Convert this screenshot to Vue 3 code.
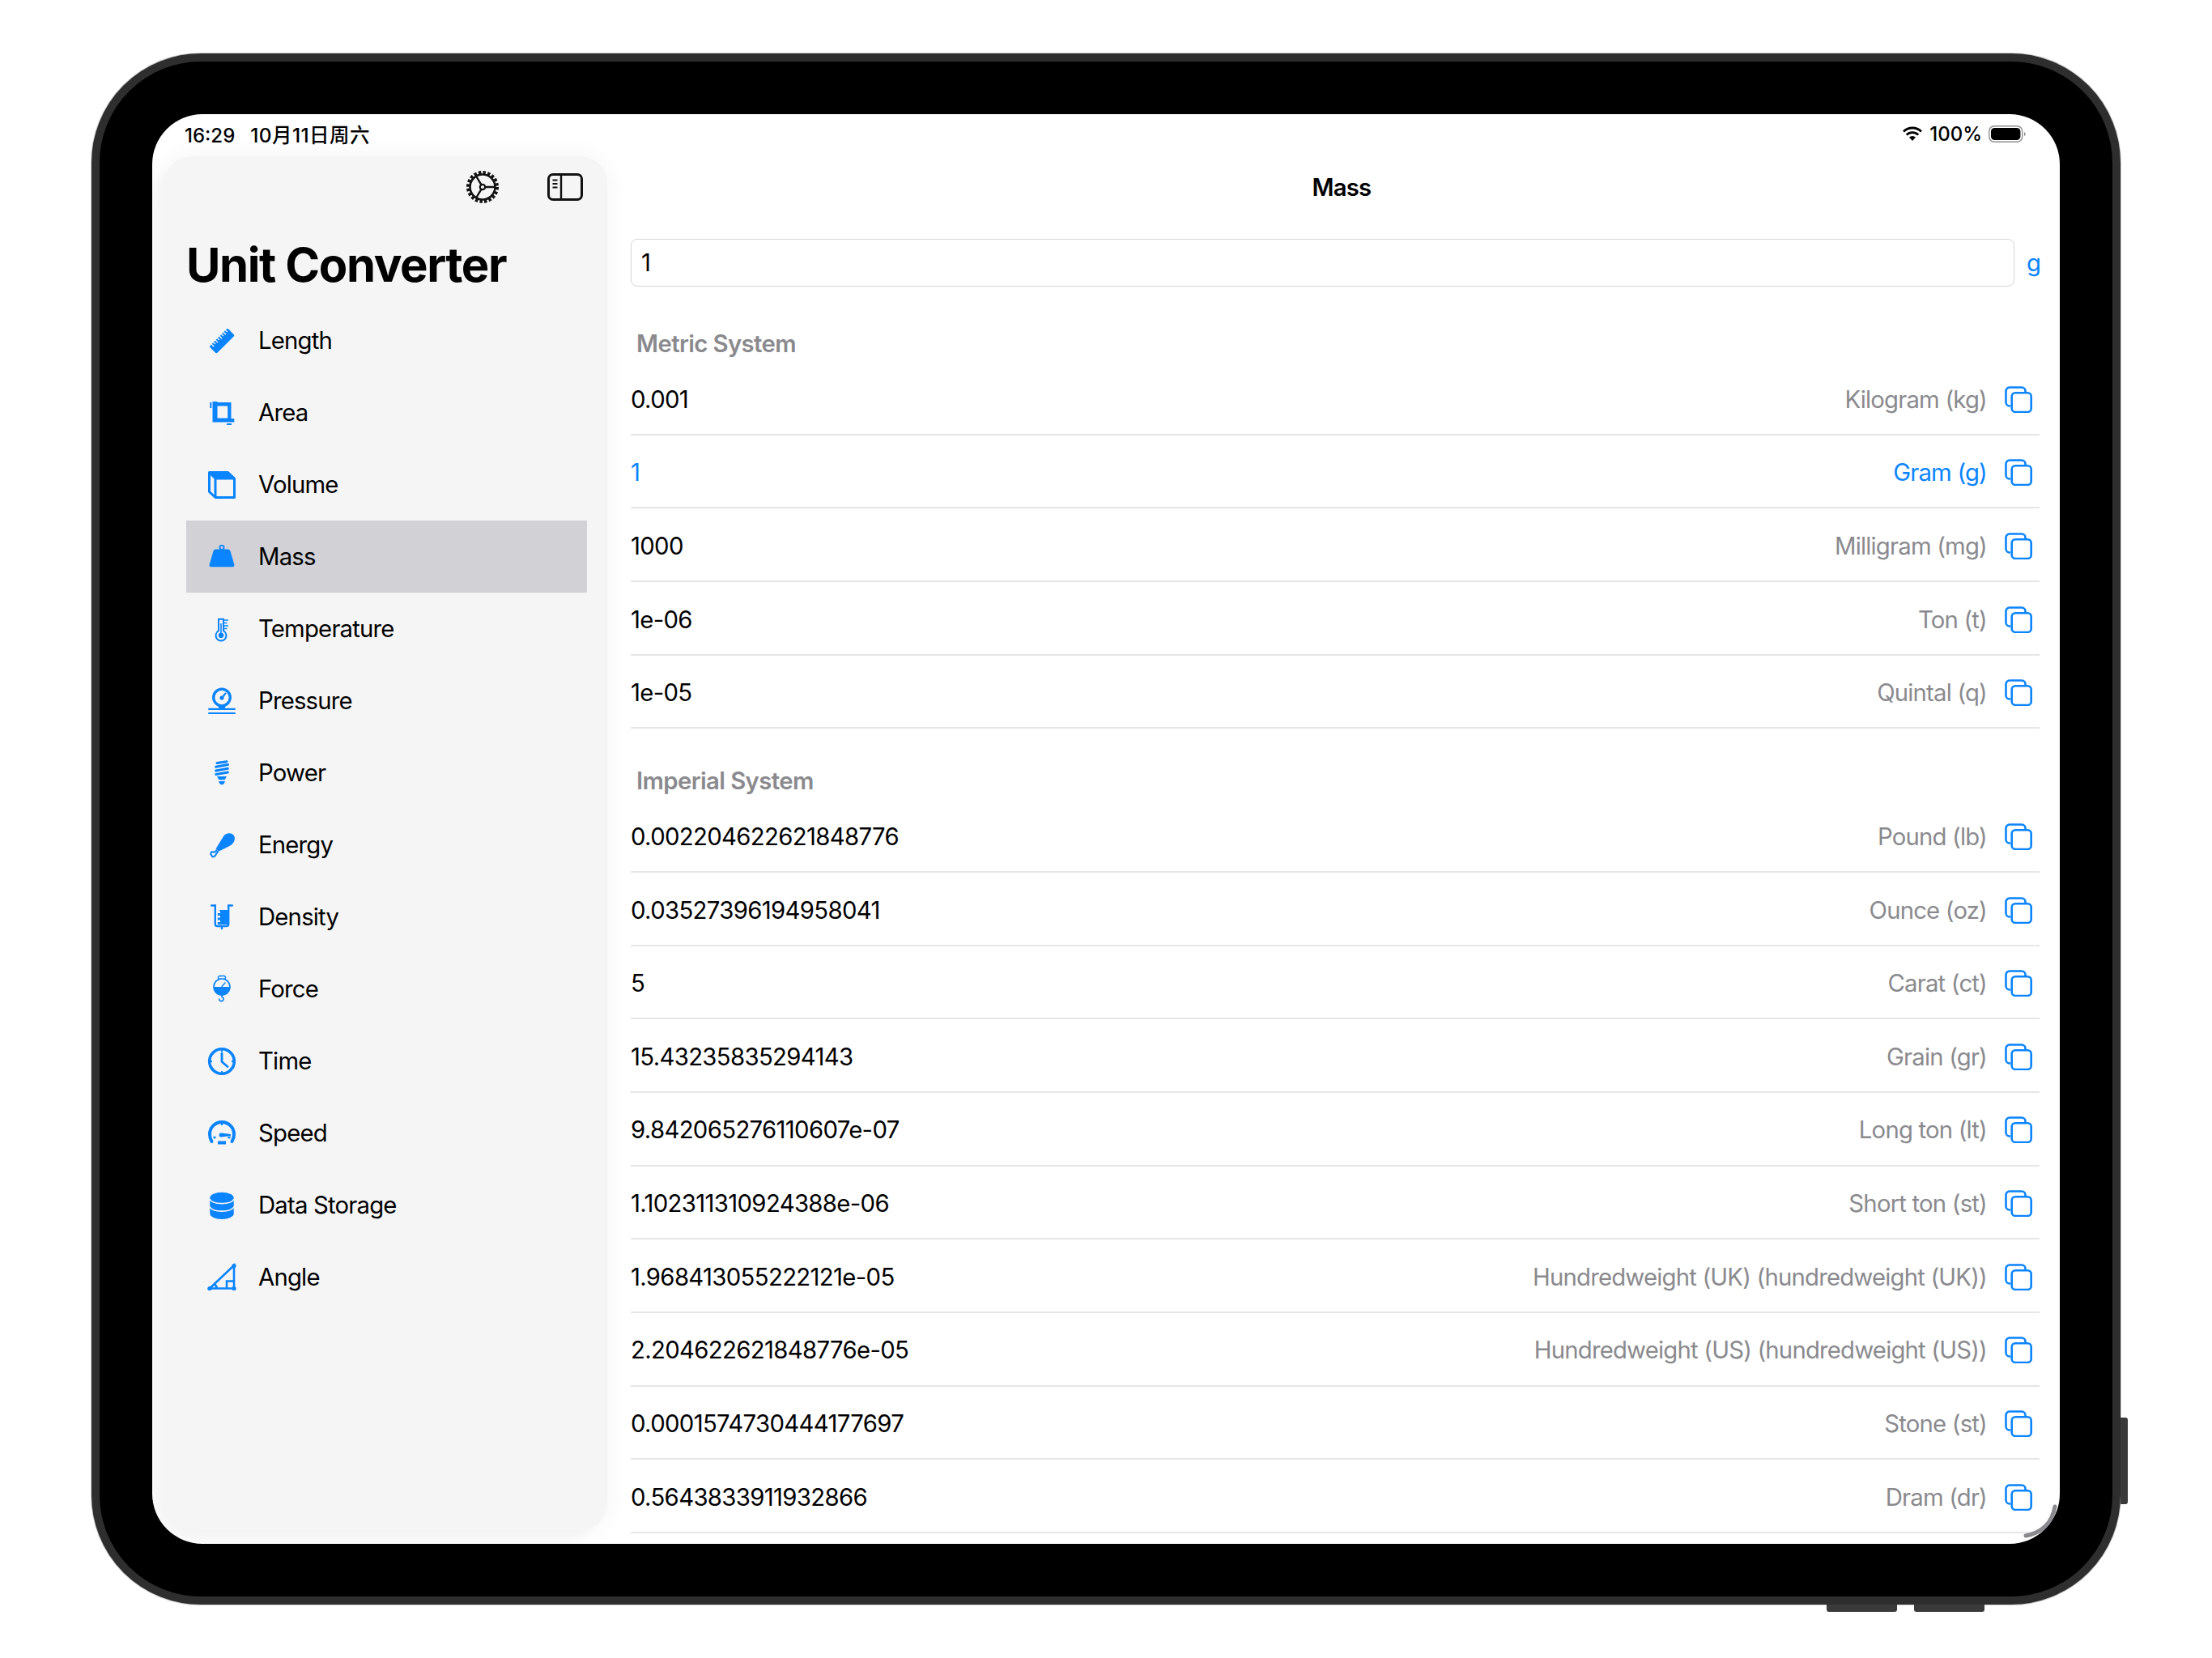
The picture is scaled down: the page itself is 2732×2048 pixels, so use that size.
<script setup>
const icons = {
  length: `<g transform="rotate(-45 18 18)"><rect x="2" y="12" width="32" height="12.5" rx="1.6" fill="currentColor"/><path d="M6 12v4M9.500 12v3M13 12v4M16.500 12v3M20 12v4M23.500 12v3M27 12v4M30.500 12v3" stroke="#f5f5f5" stroke-width="1.4"/></g>`,
  area: `<path fill="currentColor" d="M6.5 4h6v1h17v20h3.8v4.5H6.5zM12.5 9.5V24.5h12.7V9.5zM3.3 5h2v7h-2zM24 31h6v2h-6z"/>`,
  volume: `<path fill="none" stroke="currentColor" stroke-width="3" stroke-linejoin="round" d="M2.5 2.5H25.5L33.5 10V33.5H10L2.5 26.5ZM2.5 2.5 10 10H33.5M10 10V33.5"/><path fill="currentColor" d="M2.5 2.5H25.5L33.5 10H10Z"/>`,
  mass: `<circle cx="18" cy="6.3" r="2.6" fill="none" stroke="currentColor" stroke-width="1.8"/><path fill="currentColor" d="M10.5 8.5H25.5Q27.8 8.5 28.5 10.8L33.3 27.3Q34 30.3 31 30.3H5Q2 30.3 2.7 27.3L7.5 10.8Q8.2 8.5 10.5 8.5Z"/>`,
  temperature: `<path fill="none" stroke="currentColor" stroke-width="2" d="M14 5.8H20V20.2A6.5 6.5 0 1 1 14 20.2Z"/><path fill="currentColor" d="M16.2 11H17.8V22.5A3.4 3.4 0 1 1 16.2 22.5Z"/><path stroke="currentColor" stroke-width="1.5" d="M20 7h6M20 10.5h4.5M20 14h6M20 17.5h4.5"/>`,
  pressure: `<circle cx="18" cy="13.5" r="10.3" fill="none" stroke="currentColor" stroke-width="3.3"/><circle cx="18" cy="14" r="2.6" fill="currentColor"/><path stroke="currentColor" stroke-width="2" stroke-linecap="round" d="M18 14 22.5 8.5"/><path fill="currentColor" d="M14 23h8v4h-8z"/><path stroke="currentColor" stroke-width="2.2" d="M1.3 27.8H34.7M1.3 33H34.7"/>`,
  power: `<g stroke="currentColor" stroke-width="3" stroke-linecap="round" fill="none"><path d="M12 5.500 24 3.800M10.600 10.200 25.400 7.500M10.600 15 25.400 12.200M10.800 19.500 25.400 17"/></g><path fill="currentColor" d="M12 22H24L21.600 26.300H14.400ZM14 28H22L20.500 31.300Q18 33.300 15.500 31.300Z"/>`,
  energy: `<path fill="currentColor" d="M10.500 22.500 21 5.500Q25.300 2.300 30 3.700 34.700 6 33.800 11.300 32.500 16.500 27 19.300L14 25.800 12.500 24.300Z"/><path fill="none" stroke="currentColor" stroke-width="2" stroke-linejoin="round" d="M11 24.500 9.500 26.500 5 26.200 4.200 29 6.500 32.500 9.700 31.300 11.500 28 13 26.500Z"/>`,
  density: `<path fill="none" stroke="currentColor" stroke-width="2.400" stroke-linecap="round" d="M5.200 3.500H9.800V26.500Q9.800 29 12.300 29H23.700Q26.200 29 26.200 26.500V3.500H30.800M18 29V32"/><path fill="currentColor" d="M15 9H26.200V27H12.800V24H16V21.500H12.800V18.500H16V16H12.800V13H16V10.500H15Z"/>`,
  force: `<rect x="13.500" y="1.500" width="9" height="4" rx="2" fill="none" stroke="currentColor" stroke-width="1.400"/><circle cx="18" cy="15" r="10" fill="#f5f5f5" stroke="currentColor" stroke-width="1.600"/><path fill="currentColor" d="M8 15H28A10 10 0 0 1 8 15Z"/><path stroke="currentColor" stroke-width="1.400" stroke-linecap="round" d="M18 14.500 22 10"/><path fill="none" stroke="currentColor" stroke-width="1.600" stroke-linecap="round" d="M18 25V27.500A2.600 2.600 0 1 1 14.800 30"/>`,
  time: `<circle cx="18" cy="18" r="15.300" fill="none" stroke="currentColor" stroke-width="3.600"/><path fill="none" stroke="currentColor" stroke-width="2.800" stroke-linecap="round" stroke-linejoin="round" d="M18 8V18.500L25 24.500"/><path stroke="currentColor" stroke-width="1.800" d="M18 4V6M18 30V32M4 18H6M30 18H32"/>`,
  speed: `<path fill="none" stroke="currentColor" stroke-width="4" stroke-linecap="round" d="M5.500 28Q3 24 3 19A15 15 0 0 1 33 19Q33 24 30.500 28"/><path stroke="currentColor" stroke-width="2.400" d="M18 5V8M7.500 23h3M25.500 23h3"/><path fill="currentColor" d="M14.500 20A2.600 2.600 0 0 1 17.500 17.500L29 19V21L17.500 22.500A2.600 2.600 0 0 1 14.500 20ZM13 27.500h10v4h-10z"/>`,
  storage: `<path fill="currentColor" d="M3.300 8.500A14.700 6.800 0 0 1 32.700 8.500V28A14.700 7 0 0 1 3.300 28Z"/><path fill="none" stroke="#f5f5f5" stroke-width="1.600" d="M3 10C6 17.500 30 17.500 33 10M3 19.500C6 27 30 27 33 19.500"/>`,
  angle: `<path fill="none" stroke="currentColor" stroke-width="2.600" d="M3 31.500H33V3ZM24 31.500V22.500H33M8.500 26.500Q12 28 11.500 31.500"/><g fill="currentColor"><circle cx="33" cy="3.500" r="2.600"/><circle cx="33" cy="31.500" r="2.600"/><circle cx="3" cy="31.500" r="2.600"/></g>`,
}

const categories = [
  { name: "Length", icon: "length" },
  { name: "Area", icon: "area" },
  { name: "Volume", icon: "volume" },
  { name: "Mass", icon: "mass", active: true },
  { name: "Temperature", icon: "temperature" },
  { name: "Pressure", icon: "pressure" },
  { name: "Power", icon: "power" },
  { name: "Energy", icon: "energy" },
  { name: "Density", icon: "density" },
  { name: "Force", icon: "force" },
  { name: "Time", icon: "time" },
  { name: "Speed", icon: "speed" },
  { name: "Data Storage", icon: "storage" },
  { name: "Angle", icon: "angle" },
]

const metric = [
  { value: "0.001", unit: "Kilogram (kg)" },
  { value: "1", unit: "Gram (g)", current: true },
  { value: "1000", unit: "Milligram (mg)" },
  { value: "1e-06", unit: "Ton (t)" },
  { value: "1e-05", unit: "Quintal (q)" },
]

const imperial = [
  { value: "0.002204622621848776", unit: "Pound (lb)" },
  { value: "0.03527396194958041", unit: "Ounce (oz)" },
  { value: "5", unit: "Carat (ct)" },
  { value: "15.43235835294143", unit: "Grain (gr)" },
  { value: "9.842065276110607e-07", unit: "Long ton (lt)" },
  { value: "1.102311310924388e-06", unit: "Short ton (st)" },
  { value: "1.968413055222121e-05", unit: "Hundredweight (UK) (hundredweight (UK))" },
  { value: "2.204622621848776e-05", unit: "Hundredweight (US) (hundredweight (US))" },
  { value: "0.0001574730444177697", unit: "Stone (st)" },
  { value: "0.5643833911932866", unit: "Dram (dr)" },
]

const sections = [
  { title: "Metric System", rows: metric },
  { title: "Imperial System", rows: imperial },
]
</script>

<template>
  <div class="stage">
    <div class="device">
      <div class="screen">
        <div class="status">
          <div class="status-left">
            <span>16:29</span>
            <span class="date">10月11日周六</span>
          </div>
          <div class="status-right">
            <svg class="wifi" width="26" height="18" viewBox="0 0 26 18">
              <path d="M13 18 9 13.6a5.8 5.8 0 0 1 8 0Z" fill="#000" />
              <path d="M5.700 10.500a10.500 10.500 0 0 1 14.600 0" fill="none" stroke="#000" stroke-width="2.8" />
              <path d="M2 6.400a16 16 0 0 1 22 0" fill="none" stroke="#000" stroke-width="2.8" />
            </svg>
            <span>100%</span>
            <svg width="46" height="21" viewBox="0 0 46 21">
              <rect x="0.7" y="0.7" width="41" height="19.6" rx="6.5" fill="none" stroke="#8e8e8e" stroke-width="1.4" />
              <rect x="3" y="3" width="36.4" height="15" rx="4.5" fill="#000" />
              <path d="M44 8v5q1.800-1 1.800-2.500T44 8Z" fill="#8e8e8e" />
            </svg>
          </div>
        </div>

        <aside class="sidebar">
          <div class="toolbar">
            <svg class="gear" width="40" height="40" viewBox="0 0 40 40">
              <circle cx="20" cy="20" r="18" fill="none" stroke="#111" stroke-width="4" stroke-dasharray="3.4 2.254" />
              <circle cx="20" cy="20" r="15.5" fill="none" stroke="#111" stroke-width="2.6" />
              <circle cx="20" cy="20" r="3.2" fill="none" stroke="#111" stroke-width="2.2" />
              <path d="M23.200 20H35M18.400 17.200 12 6.500M18.400 22.800 12 33.500" stroke="#111" stroke-width="2.4" />
            </svg>
            <svg class="panel" width="44" height="34" viewBox="0 0 44 34">
              <rect x="1.5" y="1.5" width="41" height="31" rx="5.5" fill="none" stroke="#111" stroke-width="3" />
              <path d="M17 2V32" stroke="#111" stroke-width="2.4" />
              <path d="M6.500 8.500h6M6.500 13h6M6.500 17.500h6" stroke="#111" stroke-width="2" />
            </svg>
          </div>
          <h1 class="app-title">Unit Converter</h1>
          <ul class="categories">
            <li v-for="c in categories" :key="c.name" class="category" :class="{ active: c.active }">
              <svg class="cat-icon" width="36" height="36" viewBox="0 0 36 36" v-html="icons[c.icon]"></svg>
              <span>{{ c.name }}</span>
            </li>
          </ul>
        </aside>

        <main class="main">
          <div class="nav-title">Mass</div>
          <div class="input-row">
            <div class="input">1</div>
            <span class="input-unit">g</span>
          </div>
          <section v-for="s in sections" :key="s.title" class="section">
            <h2 class="section-title">{{ s.title }}</h2>
            <div v-for="r in s.rows" :key="r.unit" class="row" :class="{ current: r.current }">
              <span class="value">{{ r.value }}</span>
              <span class="unit">{{ r.unit }}</span>
              <svg class="copy" width="34" height="33" viewBox="0 0 34 33">
                <path d="M7 24.500H6A4.500 4.500 0 0 1 1.500 20V6A4.500 4.500 0 0 1 6 1.500H21A4.500 4.500 0 0 1 25.500 6V8" fill="none" stroke="#0a84ff" stroke-width="2.6" />
                <rect x="8.7" y="8.2" width="24" height="23.8" rx="4.5" fill="none" stroke="#0a84ff" stroke-width="2.6" />
              </svg>
            </div>
          </section>
        </main>

        <svg class="resize" width="44" height="44" viewBox="0 0 44 44">
          <path d="M40 4Q35 34 4 40" fill="none" stroke="#8a8a8e" stroke-width="5" stroke-linecap="round" />
        </svg>
      </div>
      <div class="side-button"></div>
      <div class="bottom-button one"></div>
      <div class="bottom-button two"></div>
    </div>
  </div>
</template>

<style>
html, body {
  margin: 0;
  background: #fff;
}
</style>

<style scoped>
.stage {
  width: 2732px;
  height: 2048px;
  box-sizing: border-box;
  padding: 66px 113px;
  background: #fff;
  font-family: Inter, "Noto Sans CJK SC", sans-serif;
  color: #000;
}
.device {
  position: relative;
  width: 2506px;
  height: 1916px;
  box-sizing: border-box;
  padding: 65px;
  background: #000;
  border: 10px solid #2e2e2e;
  border-radius: 135px;
  box-shadow: 0 0 0 1px rgba(90, 90, 90, 0.3);
}
.screen {
  position: relative;
  display: flex;
  width: 2356px;
  height: 1766px;
  overflow: hidden;
  background: #fff;
  border-radius: 62px;
}
.status {
  position: absolute;
  top: 12px;
  left: 40px;
  right: 42px;
  display: flex;
  justify-content: space-between;
  align-items: center;
  height: 24px;
  font-size: 24px;
  font-weight: 500;
}
.status-left {
  display: flex;
  align-items: baseline;
  gap: 19px;
}
.date {
  font-size: 24.5px;
  letter-spacing: 0.4px;
}
.status-right {
  display: flex;
  align-items: center;
  gap: 8px;
}
.sidebar {
  flex: none;
  box-sizing: border-box;
  width: 547px;
  margin: 52px 0 17px 15px;
  padding: 0 0 0 27px;
  background: #f5f5f5;
  border-radius: 34px;
  box-shadow: 0 0 30px rgba(0, 0, 0, 0.05), -16px 16px 14px rgba(0, 0, 0, 0.025);
}
.toolbar {
  display: flex;
  justify-content: flex-end;
  align-items: center;
  gap: 60px;
  height: 40px;
  margin-top: 18px;
  padding-right: 30px;
}
.app-title {
  margin: 41px 0 0;
  font-size: 58px;
  line-height: 70px;
  font-weight: 700;
  letter-spacing: -1.4px;
}
.categories {
  list-style: none;
  width: 495px;
  margin: 14px 0 0;
  padding: 0;
}
.category {
  display: flex;
  align-items: center;
  gap: 27px;
  height: 89px;
  box-sizing: border-box;
  padding-left: 26px;
  font-size: 29.3px;
  letter-spacing: -0.8px;
}
.category.active {
  background: #d1d1d6;
}
.cat-icon {
  flex: none;
  color: #0a84ff;
}
.main {
  flex: 1;
  min-width: 0;
  margin-left: 29px;
  padding-right: 25px;
}
.nav-title {
  margin: 71px 0 0 16px;
  height: 40px;
  line-height: 40px;
  text-align: center;
  font-size: 29.3px;
  font-weight: 600;
  letter-spacing: -0.8px;
}
.input-row {
  display: flex;
  align-items: center;
  gap: 15px;
  margin-top: 43px;
}
.input {
  flex: 1;
  box-sizing: border-box;
  height: 59px;
  line-height: 57px;
  padding-left: 12px;
  border: 1px solid #d6d6d6;
  border-radius: 8px;
  font-size: 29.3px;
}
.input-unit {
  width: 16px;
  font-size: 29.3px;
  color: #0a84ff;
}
.section {
  margin-top: 53px;
}
.section + .section {
  margin-top: 47px;
}
.section-title {
  margin: 0 0 4px 7px;
  height: 36px;
  line-height: 36px;
  font-size: 29.3px;
  font-weight: 600;
  letter-spacing: -0.6px;
  color: #8a8a8e;
}
.row {
  display: flex;
  align-items: center;
  box-sizing: border-box;
  height: 90.67px;
  padding-top: 3.5px;
  border-bottom: 2px solid #e6e6e8;
  font-size: 29.3px;
}
.row.current {
  color: #0a84ff;
}
.value {
  flex: 1;
  letter-spacing: -0.65px;
}
.unit {
  color: #8a8a8e;
  letter-spacing: -0.8px;
}
.row.current .unit {
  color: #0a84ff;
}
.copy {
  flex: none;
  margin: 0 9px 0 22px;
}
.resize {
  position: absolute;
  right: 2px;
  bottom: 6px;
}
.side-button {
  position: absolute;
  right: -19px;
  top: 1675px;
  width: 9px;
  height: 107px;
  background: #3a3a3a;
  border-radius: 0 3px 3px 0;
}
.bottom-button {
  position: absolute;
  bottom: -19px;
  width: 87px;
  height: 9px;
  background: #3a3a3a;
  border-radius: 0 0 3px 3px;
}
.bottom-button.one {
  left: 2133px;
}
.bottom-button.two {
  left: 2241px;
}
</style>
